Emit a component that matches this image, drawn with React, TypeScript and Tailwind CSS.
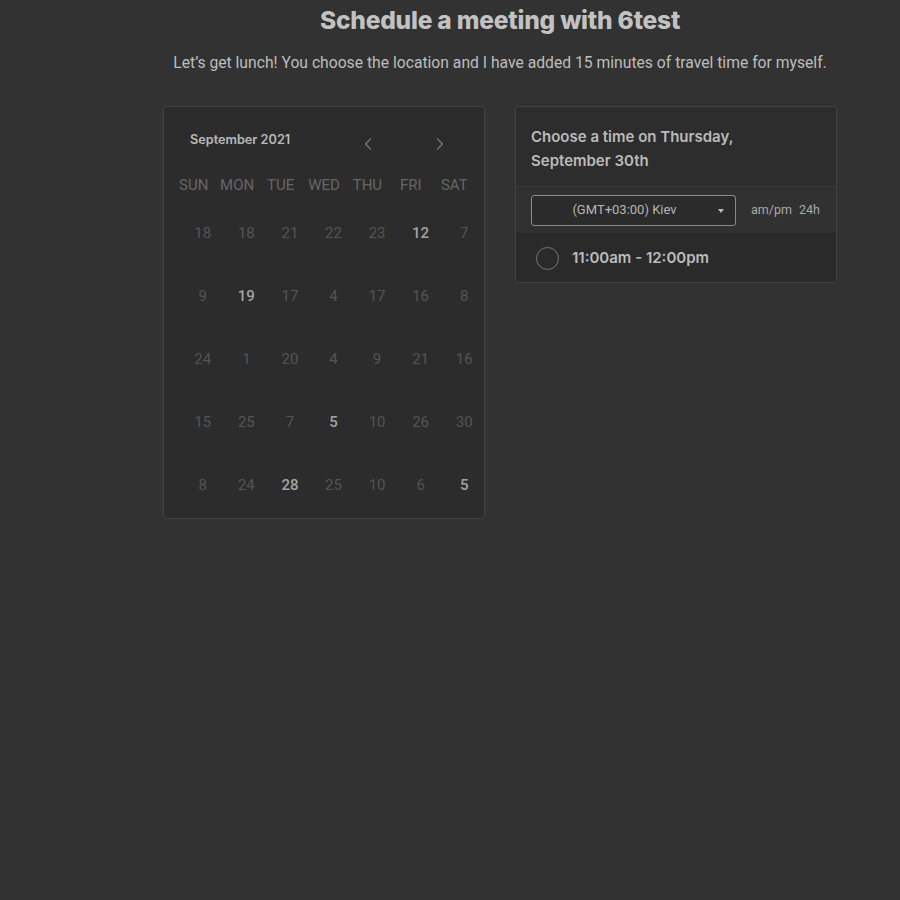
import { ChevronLeft, ChevronRight } from 'lucide-react';

const weekdays = ["SUN", "MON", "TUE", "WED", "THU", "FRI", "SAT"];

// [label, available]
const weeks: [string, boolean][][] = [
  [["18", false], ["18", false], ["21", false], ["22", false], ["23", false], ["12", true], ["7", false]],
  [["9", false], ["19", true], ["17", false], ["4", false], ["17", false], ["16", false], ["8", false]],
  [["24", false], ["1", false], ["20", false], ["4", false], ["9", false], ["21", false], ["16", false]],
  [["15", false], ["25", false], ["7", false], ["5", true], ["10", false], ["26", false], ["30", false]],
  [["8", false], ["24", false], ["28", true], ["25", false], ["10", false], ["6", false], ["5", true]],
];

function Calendar() {
  return (
    <div className="w-[322px] h-[413px] rounded-[3px] border border-[#424242] bg-[#2c2c2c]">
      <div className="flex items-center h-[64px] pl-[26px] pt-[2px]">
        <span className="font-['Inter'] font-semibold text-[12.7px] text-[#b9b9b9] w-[168px]">September 2021</span>
        <div className="flex items-center gap-[52px] pt-[8px]">
          <ChevronLeft className="w-[20px] h-[20px] text-[#777]" strokeWidth={1.5} />
          <ChevronRight className="w-[20px] h-[20px] text-[#777]" strokeWidth={1.5} />
        </div>
      </div>
      <div className="grid grid-cols-7 px-[8px] mt-[4px] font-['Roboto'] text-[15px] text-[#666] leading-[20px]">
        {weekdays.map((d) => (
          <div key={d} className="text-center">{d}</div>
        ))}
      </div>
      <div className="mt-[7px] pl-[17px] mr-[-2px]">
        {weeks.map((week, i) => (
          <div key={i} className="grid grid-cols-7 h-[63px] items-center font-['Roboto'] text-[15px]">
            {week.map(([n, on], j) => (
              <div
                key={j}
                className={on ? "text-center font-medium text-[#a3a3a3]" : "text-center text-[#545454]"}
              >
                {n}
              </div>
            ))}
          </div>
        ))}
      </div>
    </div>
  );
}

function TimePanel() {
  return (
    <div className="w-[322px] rounded-[3px] border border-[#424242] bg-[#2d2d2d] overflow-hidden">
      <div className="px-[15px] pt-[18px] pb-[13px] font-['Inter'] font-semibold text-[15px] leading-[24px] text-[#bababa]">
        Choose a time on Thursday,
        <br />
        September 30th
      </div>
      <div className="flex items-center border-t border-[#3a3a3a] bg-[#313131] h-[47px] px-[15px]">
        <div className="relative flex items-center justify-center w-[205px] h-[31px] rounded-[3px] border border-[#8a8a8a] bg-[#2b2b2b] font-['Roboto'] text-[13px] text-[#b5b5b5]">
          <span className="mr-[18px]">(GMT+03:00) Kiev</span>
          <span className="absolute right-[11px] top-[13px] w-0 h-0 border-l-[3.5px] border-r-[3.5px] border-t-[4px] border-l-transparent border-r-transparent border-t-[#bbb]" />
        </div>
        <div className="ml-[15px] font-['Roboto'] text-[12.5px] text-[#a9a9a9] flex gap-[7px]">
          <span>am/pm</span>
          <span>24h</span>
        </div>
      </div>
      <div className="flex items-center h-[49px] px-[20px] pt-[2px] bg-[#2a2a2a]">
        <span className="w-[23px] h-[23px] rounded-full border-[1.5px] border-[#777]" />
        <span className="ml-[13px] font-['Inter'] font-semibold text-[15px] text-[#bcbcbc]">11:00am - 12:00pm</span>
      </div>
    </div>
  );
}

export default function App() {
  return (
    <div className="min-h-[900px] bg-[#323232] pl-[100px]">
      <div className="flex flex-col items-center">
        <h1 className="mt-[4px] font-['Inter'] font-extrabold text-[24.5px] leading-[32px] text-[#c2c2c2] tracking-[-0.2px]">
          Schedule a meeting with 6test
        </h1>
        <p className="mt-[17px] font-['Roboto'] text-[15.7px] leading-[20px] text-[#bdbdbd]">
          Let’s get lunch! You choose the location and I have added 15 minutes of travel time for myself.
        </p>
        <div className="flex items-start gap-[30px] mt-[33px]">
          <Calendar />
          <TimePanel />
        </div>
      </div>
    </div>
  );
}
